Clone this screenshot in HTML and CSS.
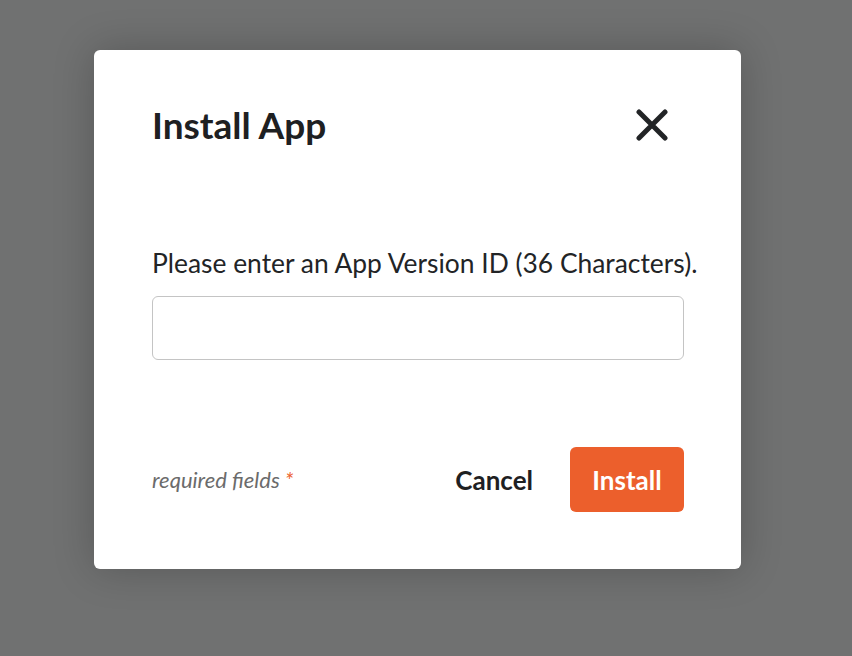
FILE: index.html
```html
<!DOCTYPE html>
<html>
<head>
<meta charset="utf-8">
<link rel="stylesheet" href="styles.css">
</head>
<body>
<div class="overlay">
  <div class="modal">
    <div class="modal-header">
      <h1 class="modal-title">Install App</h1>
      <button class="close-btn" aria-label="Close">
        <svg width="32" height="32" viewBox="0 0 32 32"><path d="M3 3 L29 29 M29 3 L3 29" stroke="#222426" stroke-width="5" stroke-linecap="round"/></svg>
      </button>
    </div>
    <div class="modal-body">
      <label class="field-label" for="vid">Please enter an App Version ID (36 Characters).</label>
      <input class="field-input" id="vid" type="text">
    </div>
    <div class="modal-footer">
      <span class="required-note">required fields <span class="asterisk">*</span></span>
      <div class="actions">
        <button class="btn-cancel">Cancel</button>
        <button class="btn-install">Install</button>
      </div>
    </div>
  </div>
</div>
</body>
</html>
```
FILE: styles.css
```css
html, body {
  margin: 0;
  padding: 0;
  height: 100%;
}
body {
  background: #707171;
  font-family: Lato, "Noto Sans", sans-serif;
  color: #222426;
}
.overlay {
  padding: 50px 0 0 94px;
}
.modal {
  width: 647px;
  height: 519px;
  box-sizing: border-box;
  background: #ffffff;
  border-radius: 6px;
  box-shadow: 0 0 40px rgba(0, 0, 0, 0.22);
  padding: 0 57px 0 58px;
  display: flex;
  flex-direction: column;
}
.modal-header {
  display: flex;
  justify-content: space-between;
  align-items: center;
  margin-top: 53px;
}
.modal-title {
  margin: 0;
  font-size: 37px;
  font-weight: 700;
  line-height: 44px;
  color: #1e2022;
}
.close-btn {
  background: none;
  border: 0;
  padding: 0;
  margin-right: 16px;
  width: 32px;
  height: 32px;
  display: flex;
}
.modal-body {
  margin-top: 101px;
  display: flex;
  flex-direction: column;
}
.field-label {
  font-size: 26.4px;
  line-height: 30px;
  white-space: nowrap;
  color: #222426;
}
.field-input {
  margin-top: 18px;
  height: 64px;
  box-sizing: border-box;
  border: 1px solid #c4c4c4;
  border-radius: 6px;
  outline: none;
}
.modal-footer {
  margin-top: 87px;
  display: flex;
  justify-content: space-between;
  align-items: center;
}
.required-note {
  font-size: 22px;
  font-style: italic;
  color: #6b6b6b;
}
.asterisk {
  color: #ec5f2c;
}
.actions {
  display: flex;
  align-items: center;
}
.btn-cancel {
  background: none;
  border: 0;
  padding: 0;
  margin-right: 37px;
  font-family: Lato, "Noto Sans", sans-serif;
  font-size: 26px;
  font-weight: 700;
  color: #1e2022;
}
.btn-install {
  width: 114px;
  height: 65px;
  border: 0;
  border-radius: 6px;
  background: #ec5f2c;
  color: #ffffff;
  font-family: Lato, "Noto Sans", sans-serif;
  font-size: 26px;
  font-weight: 700;
}
```
